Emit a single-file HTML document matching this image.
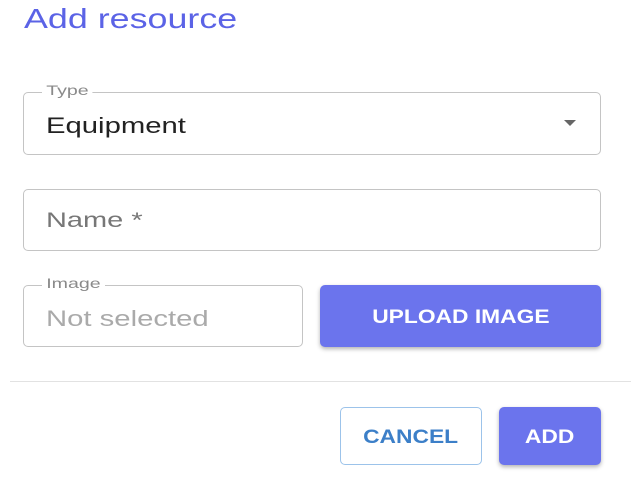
<!DOCTYPE html>
<html><head><style>
body{margin:0;width:631px;height:487px;background:#fff;font-family:"Liberation Sans",sans-serif;position:relative;overflow:hidden}
.a{position:absolute;box-sizing:border-box;transform-origin:left center;white-space:nowrap}
.f{border:1px solid #c4c4c4;border-radius:5px}
.lbl{position:absolute;background:#fff;padding:0 3px;font-size:14px;color:#8a8a8a;top:-11px;left:18px;transform:scaleX(1.4);transform-origin:left center}
.btn{background:#6b74ed;color:#fff;font-weight:bold;border-radius:5px;box-shadow:0 2px 4px rgba(0,0,0,.3);display:flex;align-items:center;justify-content:center;font-size:19px;padding-top:3px}
.btn span,.c span{display:inline-block;transform:scaleX(1.2)}
</style></head><body>
<div class="a" style="left:24px;top:3px;font-size:28px;color:#5b63e6;transform:scaleX(1.28)">Add resource</div>
<div class="a f" style="left:23px;top:92px;width:578px;height:63px">
 <span class="lbl">Type</span>
 <div class="a" style="left:22px;top:20px;font-size:22px;color:#222;transform:scaleX(1.33)">Equipment</div>
 <div class="a" style="left:540px;top:27px;width:0;height:0;border-left:6px solid transparent;border-right:6px solid transparent;border-top:6px solid #666"></div>
</div>
<div class="a f" style="left:23px;top:189px;width:578px;height:62px">
 <div class="a" style="left:22px;top:19px;font-size:21px;color:#777;transform:scaleX(1.38)">Name *</div>
</div>
<div class="a f" style="left:23px;top:285px;width:280px;height:62px">
 <span class="lbl">Image</span>
 <div class="a" style="left:22px;top:20px;font-size:22px;color:#aaa;transform:scaleX(1.33)">Not selected</div>
</div>
<div class="a btn" style="left:320px;top:285px;width:281px;height:62px"><span>UPLOAD IMAGE</span></div>
<div class="a" style="left:10px;top:381px;width:621px;height:1px;background:#e2e2e2"></div>
<div class="a c" style="left:340px;top:407px;width:142px;height:58px;border:1px solid #9cc3ea;border-radius:5px;display:flex;align-items:center;justify-content:center;color:#3c7fc8;font-weight:bold;font-size:19px;padding-top:3px"><span>CANCEL</span></div>
<div class="a btn" style="left:499px;top:407px;width:102px;height:58px"><span>ADD</span></div>
</body></html>
